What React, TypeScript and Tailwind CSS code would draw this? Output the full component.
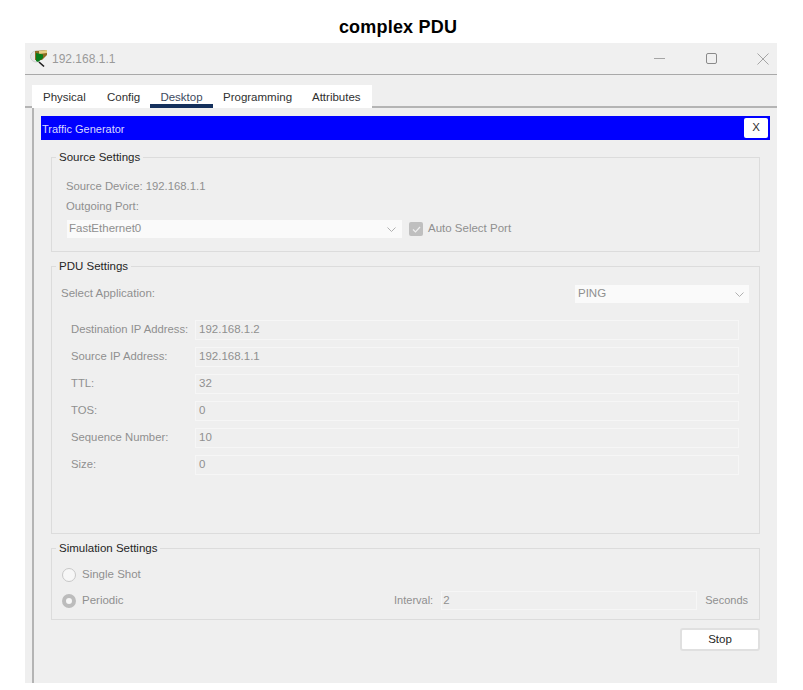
const rows = [
  { label: 'Destination IP Address:', value: '192.168.1.2' },
  { label: 'Source IP Address:', value: '192.168.1.1' },
  { label: 'TTL:', value: '32' },
  { label: 'TOS:', value: '0' },
  { label: 'Sequence Number:', value: '10' },
  { label: 'Size:', value: '0' },
]

const tabs = ['Physical', 'Config', 'Desktop', 'Programming', 'Attributes']

function Chevron() {
  return (
    <svg className="w-[9px] h-[5px] text-[#b0b0b0]" fill="none" stroke="currentColor" viewBox="0 0 9 5">
      <path d="M0.500 0.500l4 4 4-4" />
    </svg>
  )
}

function Group({ title, className, children }: { title: string; className: string; children: React.ReactNode }) {
  return (
    <fieldset className={`border border-[#dcdcdc] min-w-0 ${className}`}>
      <legend className="ml-[4px] px-[3px] text-[11.5px] leading-[16px] text-[#262626]">{title}</legend>
      {children}
    </fieldset>
  )
}

export default function App() {
  return (
    <div className="w-[803px] h-[690px] bg-white font-['Liberation_Sans',Arial,sans-serif] text-[11.5px] text-[#8f8f8f]">
      <h1 className="h-[43px] pt-[17px] pr-[7px] text-center text-[18px] leading-[20px] tracking-[0.2px] font-bold text-black">complex PDU</h1>

      <div className="ml-[25px] w-[752px] h-[640px] bg-[#efefef] flex flex-col">
        {/* Title bar */}
        <div className="h-[32px] shrink-0 flex items-center border-b border-[#a9a9a9] bg-[#f0f0f0]">
          <svg className="ml-[5px] w-[18px] h-[19px]" viewBox="0 0 18 19">
            <circle cx="6" cy="7.500" r="5.500" fill="#e6e6e6" stroke="#cfcfcf" />
            <path d="M5 2L17 1v5l-5 5H5z" fill="#8c6a22" />
            <path d="M9 2l8-1v3l-8 1z" fill="#e6cf86" />
            <path d="M6 4l7 1.500V9l-5 4-2-1z" fill="#0b7d1a" />
            <path d="M9 13l5 4.500" stroke="#1c1c1c" strokeWidth="1.600" />
          </svg>
          <span className="ml-[4px] text-[12px] text-[#9a9a9a]">192.168.1.1</span>
          <svg className="ml-auto w-[11px] h-[11px] text-[#a5a5a5]" fill="none" stroke="currentColor" viewBox="0 0 11 11">
            <path d="M0 5.500h11" />
          </svg>
          <svg className="ml-[41px] w-[11px] h-[11px] text-[#8a8a8a]" fill="none" stroke="currentColor" viewBox="0 0 11 11">
            <rect x="0.500" y="0.500" width="10" height="10" rx="1.500" />
          </svg>
          <svg className="ml-[40px] mr-[8px] w-[12px] h-[12px] text-[#a5a5a5]" fill="none" stroke="currentColor" viewBox="0 0 12 12">
            <path d="M0.500 0.500l11 11M11.500 0.500l-11 11" />
          </svg>
        </div>

        {/* Tabs */}
        <div className="h-[33px] shrink-0 pt-[10px] pl-[7px] border-b-2 border-[#b4b4b4]">
          <div className="w-[340px] h-[23px] bg-white flex text-[11.5px] text-[#303030]">
            {tabs.map((tab) => (
              <div
                key={tab}
                className={
                  tab === 'Desktop'
                    ? 'w-[63px] pt-[5px] text-center leading-[15px] border-b-[4px] border-[#14305c] h-[23px] text-[#3d4a60]'
                    : tab === 'Physical'
                      ? 'w-[66px] pl-[11px] pt-[5px] leading-[15px]'
                      : tab === 'Config'
                      ? 'w-[52px] pl-[9px] pt-[5px] leading-[15px]'
                      : tab === 'Programming'
                        ? 'w-[88px] pl-[10px] pt-[5px] leading-[15px]'
                        : 'flex-1 pl-[11px] pt-[5px] leading-[15px]'
                }
              >
                {tab}
              </div>
            ))}
          </div>
        </div>

        {/* Body */}
        <div className="flex-1 ml-[7px] border-l-2 border-[#b4b4b4] pl-[7px] pr-[7px] pt-[8px]">
          <div className="h-[24px] bg-[#0000ff] flex items-center justify-between pl-[1px] pr-[2px]">
            <span className="mt-[3px] text-[11px] text-[#d8d8ff]">Traffic Generator</span>
            <button className="w-[24px] h-[20px] bg-white rounded-[2px] text-[11.5px] text-[#303030]">X</button>
          </div>

          <div className="pl-[10px] pr-[10px]">
            <Group title="Source Settings" className="mt-[9px] h-[103px]">
              <div className="pl-[14px] pt-[14px] leading-[15px] text-[11.300px]">Source Device: 192.168.1.1</div>
              <div className="pl-[14px] pt-[5px] leading-[15px] text-[11.300px]">Outgoing Port:</div>
              <div className="flex items-center pl-[15px] pt-[6px]">
                <div className="w-[335px] h-[18px] bg-[#fafafa] flex items-center justify-between pl-[2px] pr-[6px]">
                  <span>FastEthernet0</span>
                  <Chevron />
                </div>
                <div className="ml-[7px] w-[14px] h-[14px] rounded-[2px] bg-[#bfbfbf] flex items-center justify-center">
                  <svg className="w-[9px] h-[7px] text-[#efefef]" fill="none" stroke="currentColor" strokeWidth="1.200" viewBox="0 0 9 7">
                    <path d="M1 3.500l2.500 2.500L8 1" />
                  </svg>
                </div>
                <span className="ml-[5px]">Auto Select Port</span>
              </div>
            </Group>

            <Group title="PDU Settings" className="mt-[6px] h-[276px]">
              <div className="flex items-center justify-between pl-[9px] pr-[10px] pt-[11px]">
                <span>Select Application:</span>
                <div className="w-[174px] h-[18px] bg-[#fafafa] flex items-center justify-between pl-[3px] pr-[5px]">
                  <span>PING</span>
                  <Chevron />
                </div>
              </div>
              <div className="pl-[19px] pr-[20px] pt-[17px] flex flex-col gap-[7px]">
                {rows.map((row) => (
                  <div key={row.label} className="flex items-center h-[20px]">
                    <span className="w-[124px] shrink-0 pb-[1px] text-[11.300px]">{row.label}</span>
                    <div className="flex-1 h-[20px] border border-[#f6f6f6] pl-[3px] leading-[17px]">{row.value}</div>
                  </div>
                ))}
              </div>
            </Group>

            <Group title="Simulation Settings" className="mt-[6px] h-[80px]">
              <div className="flex items-center pl-[10px] mt-[9px] pt-[1px] h-[19px]">
                <span className="w-[14px] h-[14px] rounded-full bg-[#f7f7f7] border border-[#c8c8c8]" />
                <span className="ml-[6px]">Single Shot</span>
              </div>
              <div className="flex items-center pl-[10px] pr-[10px] mt-[7px] h-[19px]">
                <span className="w-[14px] h-[14px] rounded-full bg-[#f7f7f7] border-[4px] border-[#bcbcbc]" />
                <span className="ml-[6px]">Periodic</span>
                <span className="ml-auto text-[11px]">Interval:</span>
                <div className="ml-[8px] w-[256px] h-[19px] border border-[#f6f6f6] pl-[1px] leading-[17px]">2</div>
                <span className="ml-[8px] mr-[1px] text-[11px]">Seconds</span>
              </div>
            </Group>

            <div className="flex justify-end mt-[8px]">
              <button className="w-[80px] h-[23px] bg-white border-2 border-[#e0e0e0] rounded-[3px] text-[11.5px] text-[#262626]">Stop</button>
            </div>
          </div>
        </div>
      </div>
    </div>
  )
}
